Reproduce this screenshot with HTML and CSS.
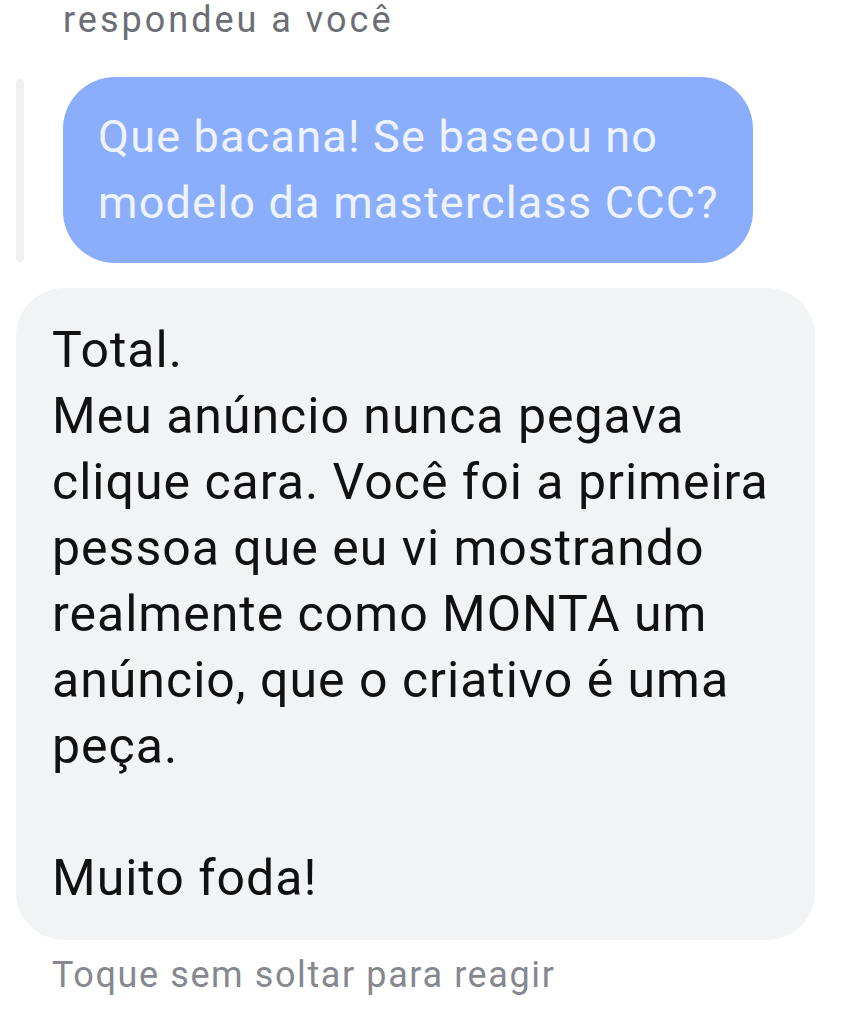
FILE: index.html
```html
<!DOCTYPE html>
<html lang="pt-BR">
<head>
    <meta charset="UTF-8">
    <meta name="viewport" content="width=device-width, initial-scale=1.0">
    <title>Mensagem</title>
    <link rel="stylesheet" href="styles.css">
</head>
<body>
    <div class="thread">
        <p class="reply-label">respondeu a você</p>
        <div class="reply">
            <div class="reply-bar"></div>
            <div class="bubble bubble-quoted">Que bacana! Se baseou no modelo da masterclass CCC?</div>
        </div>
        <div class="bubble bubble-received">Total.
Meu anúncio nunca pegava clique cara. Você foi a primeira pessoa que eu vi mostrando realmente como MONTA um anúncio, que o criativo é uma peça.

Muito foda!</div>
        <p class="hint">Toque sem soltar para reagir</p>
    </div>
</body>
</html>
```

FILE: styles.css
```css
body {
    margin: 0;
    padding: 0;
    background-color: #fff;
    font-family: Roboto, "Liberation Sans", Arial, sans-serif;
}
.thread {
    width: 843px;
}
.reply-label {
    margin: 0 0 0 63px;
    font-size: 36px;
    line-height: 40px;
    letter-spacing: 3px;
    color: #6b6e74;
}
.reply {
    display: flex;
    align-items: stretch;
    gap: 39px;
    margin-top: 37px;
    padding-left: 16px;
}
.reply-bar {
    width: 8px;
    margin: 2px 0 1px;
    border-radius: 4px;
    background-color: #eef0f2;
}
.bubble {
    box-sizing: border-box;
}
.bubble-quoted {
    width: 690px;
    padding: 27px 20px 27px 35px;
    border-radius: 52px;
    background-color: #8aaefb;
    color: #eef3fe;
    font-size: 45px;
    line-height: 66px;
    letter-spacing: 1.2px;
}
.bubble-received {
    width: 799px;
    margin: 25px 0 0 16px;
    padding: 29px 36px;
    border-radius: 48px;
    background-color: #f2f3f5;
    color: #111;
    font-size: 50px;
    line-height: 66px;
    letter-spacing: 1px;
    white-space: pre-line;
}
.hint {
    margin: 13px 0 0 52px;
    font-size: 36px;
    line-height: 44px;
    letter-spacing: 1.6px;
    color: #85888e;
}
```
